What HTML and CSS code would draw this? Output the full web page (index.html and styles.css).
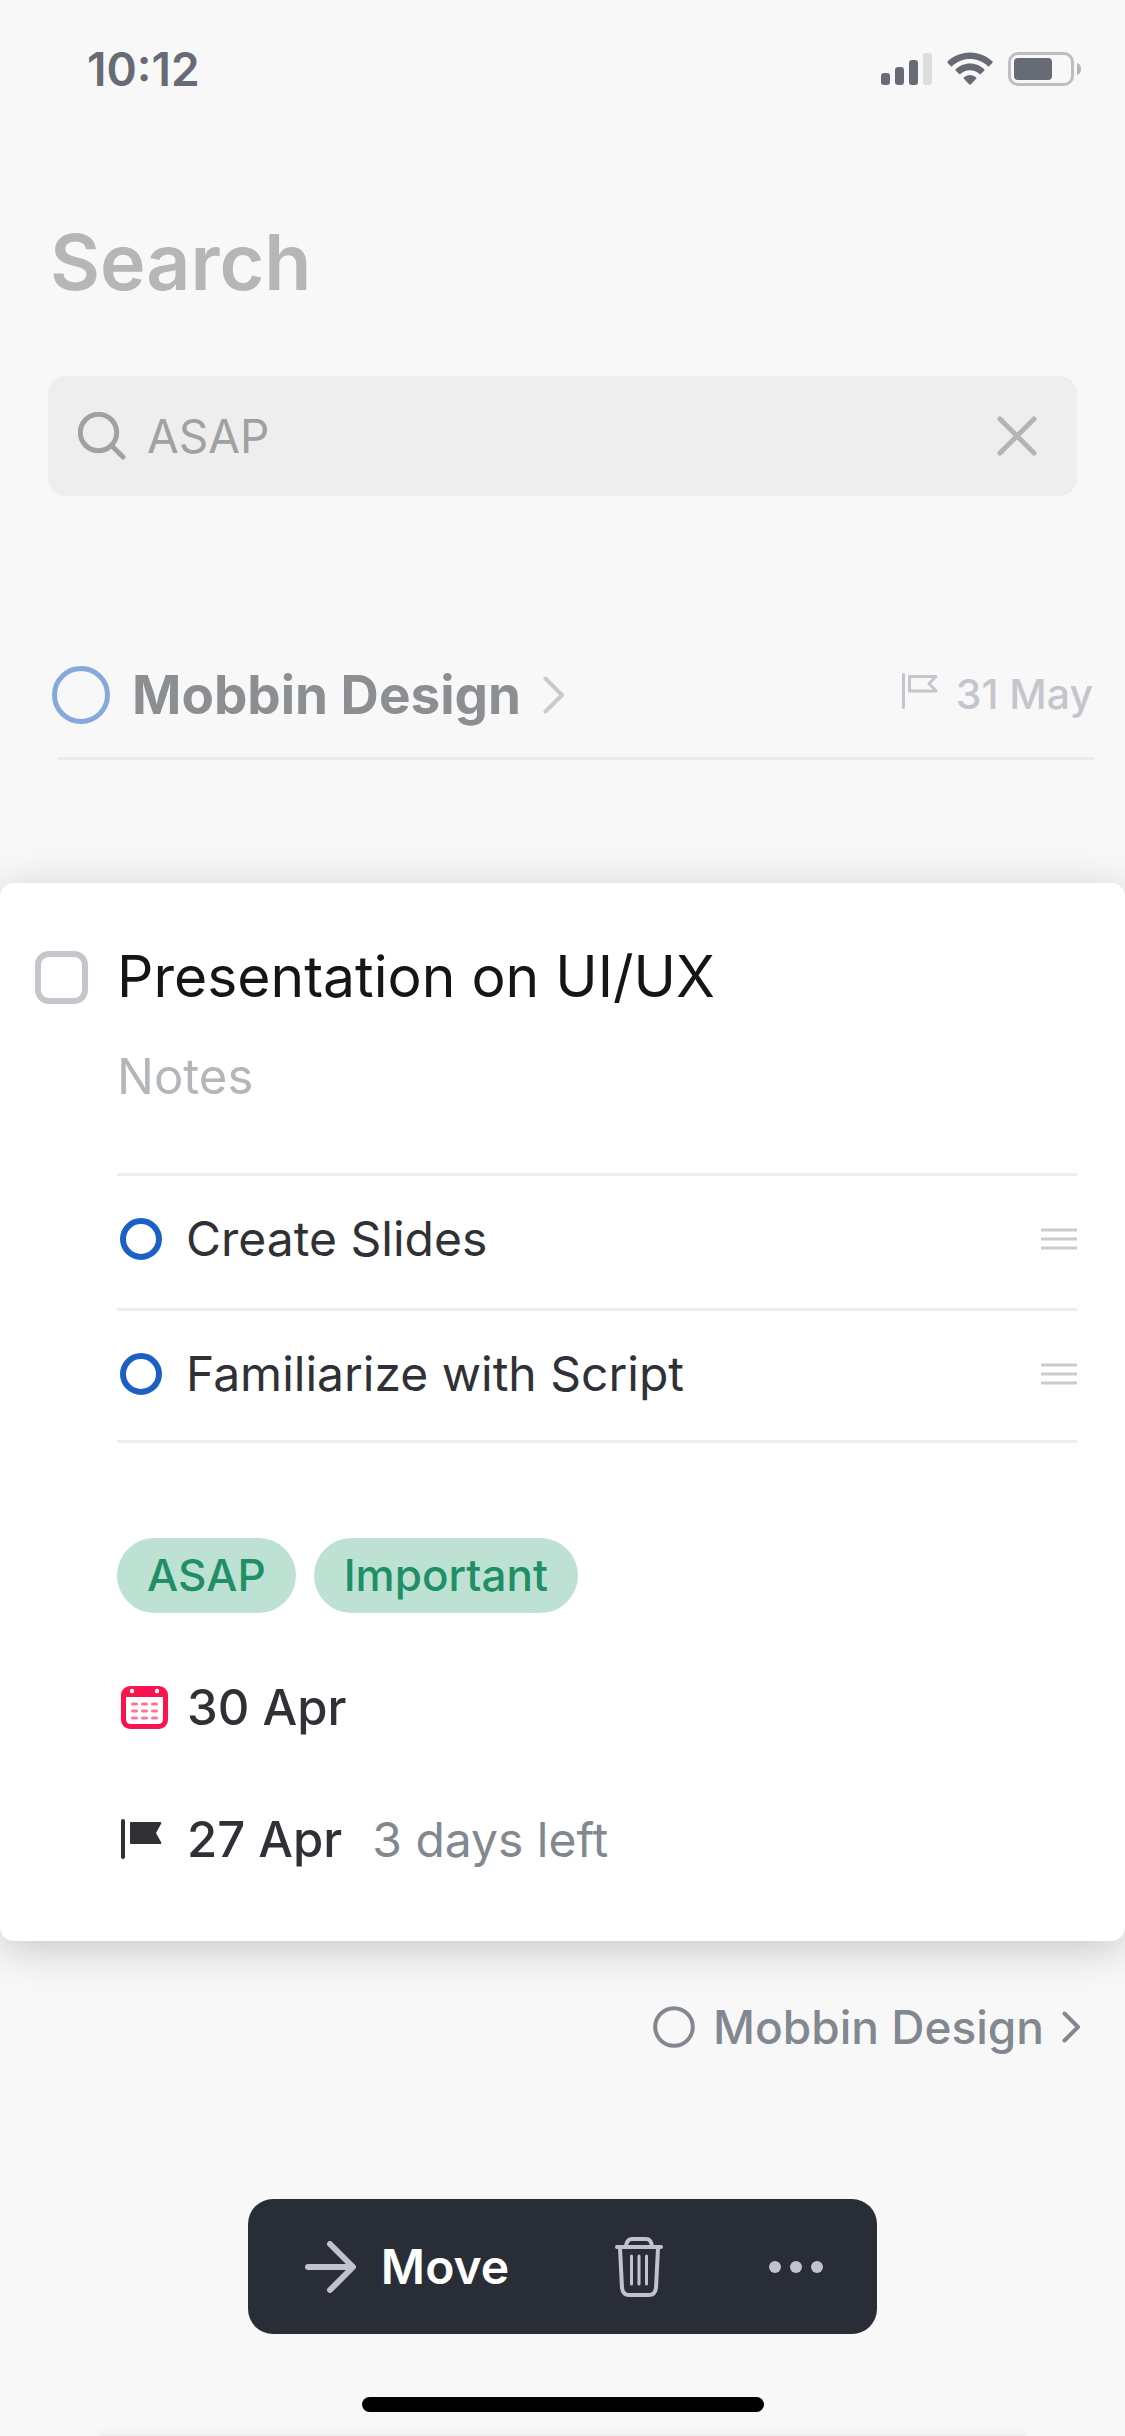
FILE: index.html
```html
<!DOCTYPE html>
<html lang="en">

<head>
    <meta charset="utf-8">
    <meta name="viewport" content="width=device-width, initial-scale=1">
    <title>Search</title>
    <link rel="stylesheet" href="styles.css">
</head>

<body>
    <div class="status-bar">
        <span class="time">10:12</span>
        <div class="status-icons">
            <svg width="51" height="34" viewBox="0 0 51 34">
                <rect x="0" y="21" width="9" height="12" rx="3" />
                <rect x="14" y="15" width="9" height="18" rx="3" />
                <rect x="28" y="8" width="9" height="25" rx="3" />
                <rect class="bar-off" x="42" y="1" width="9" height="32" rx="3" />
            </svg>
            <svg width="46" height="34" viewBox="0 0 46 34">
                <path d="M23 0.500C31.800 0.500 39.800 4 45.500 9.600Q46 10.200 45.500 10.800L42.100 14.200Q41.500 14.700 40.900 14.200C36.200 9.700 29.900 7 23 7S9.800 9.700 5.100 14.200Q4.500 14.700 3.900 14.200L0.500 10.800Q0 10.200 0.500 9.600C6.200 4 14.200 0.500 23 0.500Z" />
                <path d="M23 11.500C28.700 11.500 33.800 13.700 37.400 17.400Q38 18 37.400 18.600L33.800 22.100Q33.200 22.700 32.600 22.100C30 19.700 26.700 18.300 23 18.300S16 19.700 13.400 22.100Q12.800 22.700 12.200 22.100L8.600 18.600Q8 18 8.600 17.400C12.200 13.700 17.300 11.500 23 11.500Z" />
                <path d="M23 23C25.300 23 27.500 24 29.200 25.500Q29.800 26.100 29.200 26.700L23.600 32.500Q23 33.100 22.400 32.500L16.800 26.700Q16.200 26.100 16.800 25.500C18.500 24 20.700 23 23 23Z" />
            </svg>
            <svg width="74" height="34" viewBox="0 0 74 34">
                <rect class="battery-case" x="1.500" y="1.500" width="63" height="31" rx="8.500" />
                <rect x="6" y="6" width="38" height="22" rx="4" />
                <path class="battery-tip" d="M69 11Q73 12 73 17T69 23Z" />
            </svg>
        </div>
    </div>

    <main>
        <h1 class="page-title">Search</h1>

        <form class="search-box">
            <svg class="search-icon" width="48" height="48" viewBox="0 0 48 48">
                <circle cx="20.500" cy="20.500" r="18.200" />
                <path d="M34 34L45 45" />
            </svg>
            <input class="search-input" type="text" value="ASAP" aria-label="Search">
            <button class="clear-button" type="button" aria-label="Clear">
                <svg width="40" height="40" viewBox="0 0 40 40">
                    <path d="M3 3L37 37M37 3L3 37" />
                </svg>
            </button>
        </form>

        <div class="project-row">
            <a class="project-link" href="#">
                <svg class="project-circle" width="58" height="58" viewBox="0 0 58 58">
                    <circle cx="29" cy="29" r="26.500" />
                </svg>
                <span>Mobbin Design</span>
                <svg class="project-chevron" width="22" height="38" viewBox="0 0 22 38">
                    <path d="M2.500 2.500L19 19L2.500 35.500" />
                </svg>
            </a>
            <span class="deadline">
                <svg width="36" height="42" viewBox="0 0 36 42">
                    <path d="M1.500 1.500V34.500M7.500 3.500H34L27 10.500L34 18H7.500Z" />
                </svg>
                31 May
            </span>
        </div>

        <section class="card">
            <div class="task-title">
                <input class="task-check" type="checkbox" id="task">
                <label for="task">Presentation on UI/UX</label>
            </div>
            <div class="card-body">
                <input class="notes" type="text" placeholder="Notes" aria-label="Notes">

                <ul class="checklist">
                    <li>
                        <input class="item-check" type="checkbox" id="slides">
                        <label for="slides">Create Slides</label>
                        <svg class="handle" width="36" height="22" viewBox="0 0 36 22">
                            <path d="M0 2H36M0 11H36M0 20H36" />
                        </svg>
                    </li>
                    <li>
                        <input class="item-check" type="checkbox" id="script">
                        <label for="script">Familiarize with Script</label>
                        <svg class="handle" width="36" height="22" viewBox="0 0 36 22">
                            <path d="M0 2H36M0 11H36M0 20H36" />
                        </svg>
                    </li>
                </ul>

                <div class="tags">
                    <span class="tag">ASAP</span>
                    <span class="tag">Important</span>
                </div>

                <div class="date-row">
                    <svg width="48" height="44" viewBox="0 0 48 44">
                        <rect class="cal-body" x="0" y="0" width="47" height="43" rx="9" />
                        <path class="cal-page" d="M5 11H42V33Q42 38 37 38H10Q5 38 5 33Z" />
                        <circle class="cal-page" cx="11" cy="5" r="2.200" />
                        <circle class="cal-page" cx="36" cy="5" r="2.200" />
                        <path class="cal-dots" d="M11.500 18H15.500M21.500 18H25.500M31.500 18H35.500M11.500 25H15.500M21.500 25H25.500M31.500 25H35.500M11.500 32H15.500M21.500 32H25.500M31.500 32H35.500" />
                    </svg>
                    <span>30 Apr</span>
                </div>
                <div class="date-row">
                    <svg width="48" height="44" viewBox="0 0 48 44">
                        <rect x="0" y="1" width="4" height="40" rx="2" />
                        <path d="M10 4H39Q41 4 40 6L35 15L40 24Q41 26 39 26H10Q9 26 9 25V5Q9 4 10 4Z" />
                    </svg>
                    <span>27 Apr</span>
                    <span class="days-left">3 days left</span>
                </div>
            </div>
        </section>

        <a class="location-link" href="#">
            <svg width="42" height="42" viewBox="0 0 42 42">
                <circle cx="21" cy="21" r="18.800" />
            </svg>
            <span>Mobbin Design</span>
            <svg width="19" height="32" viewBox="0 0 19 32">
                <path d="M2.500 2.500L16 16L2.500 29.500" />
            </svg>
        </a>
    </main>

    <nav class="toolbar">
        <button type="button" class="move-button">
            <svg width="51" height="52" viewBox="0 0 51 52">
                <path d="M3 26H47M25 3L48 26L25 49" />
            </svg>
            Move
        </button>
        <button type="button" aria-label="Delete">
            <svg class="trash" width="48" height="62" viewBox="0 0 48 62">
                <path d="M2 11H46" />
                <path d="M11 10Q12 3 17 3H31Q36 3 37 10" />
                <path d="M5 12L7 52Q8 59 14 59H34Q40 59 41 52L43 12" />
                <path class="trash-lines" d="M16.500 20V48M24 20V48M31.500 20V48" />
            </svg>
        </button>
        <button type="button" aria-label="More">
            <svg class="dots" width="54" height="12" viewBox="0 0 54 12">
                <circle cx="6" cy="6" r="6" />
                <circle cx="27" cy="6" r="6" />
                <circle cx="48" cy="6" r="6" />
            </svg>
        </button>
    </nav>
    <div class="home-indicator"></div>
    <div class="bottom-edge"></div>
</body>

</html>
```

FILE: styles.css
```css
* {
    box-sizing: border-box;
}

body {
    margin: 0;
    min-height: 100vh;
    display: flex;
    flex-direction: column;
    background-color: #f8f8f8;
    font-family: Inter, 'Liberation Sans', sans-serif;
    color: #303136;
    overflow-x: hidden;
}

svg {
    display: block;
    flex-shrink: 0;
}

button,
input {
    font: inherit;
    margin: 0;
    padding: 0;
    border: 0;
    background: none;
    outline: none;
}

a {
    text-decoration: none;
}

.status-bar {
    display: flex;
    justify-content: space-between;
    align-items: center;
    padding: 42px 43px 0 87px;
    line-height: 54px;
    color: #666b75;
}

.time {
    font-size: 46px;
    font-weight: 600;
}

.status-icons {
    display: flex;
    gap: 15px;
    fill: #666b75;
}

.bar-off {
    fill: #dcdddf;
}

.battery-case {
    fill: none;
    stroke: #bdbec2;
    stroke-width: 3;
}

.battery-tip {
    fill: #b3b5ba;
}

.page-title {
    margin: 118px 50px 66px;
    font-size: 77px;
    font-weight: 600;
    line-height: 96px;
    color: #b5b6b8;
}

.search-box {
    display: flex;
    align-items: center;
    gap: 21px;
    height: 120px;
    margin: 0 48px;
    padding: 0 40px 0 30px;
    border-radius: 18px;
    background-color: #eeeeee;
}

.search-icon {
    fill: none;
    stroke: #a0a2a1;
    stroke-width: 5;
    stroke-linecap: round;
}

.search-input {
    flex: 1;
    min-width: 0;
    font-size: 46px;
    line-height: 60px;
    color: #a0a2a1;
}

.clear-button svg {
    stroke: #b2b5b4;
    stroke-width: 5;
    stroke-linecap: round;
}

.project-row {
    display: flex;
    justify-content: space-between;
    align-items: center;
    height: 128px;
    margin: 136px 30px 0 57px;
    border-bottom: 3px solid #ebebeb;
}

.project-link {
    display: flex;
    align-items: center;
    gap: 22px;
    margin-left: -5px;
    font-size: 53px;
    font-weight: 700;
    color: #8b8f92;
}

.project-circle {
    fill: none;
    stroke: #86a9dc;
    stroke-width: 5;
}

.project-chevron {
    fill: none;
    stroke: #c9cacc;
    stroke-width: 4;
    stroke-linecap: round;
    stroke-linejoin: round;
}

.deadline {
    display: flex;
    align-items: center;
    gap: 18px;
    padding-right: 2px;
    font-size: 41px;
    font-weight: 500;
    line-height: 54px;
    padding-bottom: 2px;
    color: #c3c6cd;
}

.deadline svg {
    fill: none;
    stroke: #c3c6cd;
    stroke-width: 3;
    stroke-linecap: round;
    stroke-linejoin: round;
}

.card {
    margin-top: 123px;
    padding: 58px 48px 71px 35px;
    border-radius: 14px;
    background-color: #ffffff;
    box-shadow: 0 8px 44px rgba(0, 0, 0, 0.2);
}

.task-title {
    display: flex;
    align-items: center;
    gap: 29px;
    font-size: 57px;
    line-height: 72px;
    color: #141517;
}

.task-check,
.item-check {
    appearance: none;
    flex-shrink: 0;
}

.task-check {
    width: 53px;
    height: 53px;
    border: 6px solid #c3c7cb;
    border-radius: 14px;
}

.card-body {
    padding-left: 82px;
}

.notes {
    display: block;
    width: 100%;
    margin-top: 34px;
    font-size: 49px;
    line-height: 60px;
    height: 60px;
}

.notes::placeholder {
    color: #b3b6ba;
    opacity: 1;
}

.checklist {
    list-style: none;
    margin: 66px 0 0;
    padding: 0;
    border-bottom: 3px solid #ededed;
}

.checklist li {
    display: flex;
    align-items: center;
    gap: 24px;
    padding: 30px 0 36px 3px;
    border-top: 3px solid #ededed;
    font-size: 48px;
    line-height: 66px;
}

.checklist li:last-child {
    padding-bottom: 33px;
}

.item-check {
    width: 42px;
    height: 42px;
    border: 6px solid #1c60c6;
    border-radius: 50%;
}

.handle {
    margin-left: auto;
    stroke: #cccccc;
    stroke-width: 3;
}

.tags {
    display: flex;
    gap: 18px;
    margin-top: 95px;
}

.tag {
    padding: 0 30px;
    border-radius: 38px;
    background-color: #bde2d3;
    color: #218f65;
    font-size: 44px;
    font-weight: 500;
    line-height: 75px;
}

.date-row {
    display: flex;
    align-items: center;
    margin-top: 65px;
    padding-left: 4px;
    font-size: 49px;
    font-weight: 500;
    line-height: 60px;
    fill: #303136;
}

.date-row + .date-row {
    margin-top: 72px;
}

.date-row svg {
    margin-right: 18px;
}

.cal-body {
    fill: #f9134f;
}

.cal-page {
    fill: #ffffff;
}

.cal-dots {
    stroke: #ff7396;
    stroke-width: 3;
    stroke-linecap: round;
}

.days-left {
    margin-left: 30px;
    font-size: 48px;
    font-weight: 400;
    color: #82888f;
}

.location-link {
    display: flex;
    justify-content: flex-end;
    align-items: center;
    gap: 18px;
    margin: 56px 44px 0 0;
    font-size: 46px;
    font-weight: 500;
    line-height: 60px;
    color: #82888f;
}

.location-link svg {
    fill: none;
    stroke: #82888f;
    stroke-width: 4;
    stroke-linecap: round;
    stroke-linejoin: round;
}

.toolbar {
    display: flex;
    align-items: center;
    align-self: center;
    gap: 106px;
    height: 135px;
    margin-top: 142px;
    padding: 0 54px 0 57px;
    border-radius: 25px;
    background-color: #292d36;
}

.toolbar button {
    color: #ffffff;
}

.toolbar svg {
    fill: none;
    stroke: #c0c3cd;
    stroke-width: 6;
    stroke-linecap: round;
    stroke-linejoin: round;
}

.toolbar .move-button {
    display: flex;
    align-items: center;
    gap: 25px;
    font-size: 48px;
    font-weight: 600;
}

.toolbar .trash {
    stroke-width: 4;
}

.toolbar .trash-lines {
    stroke-width: 3;
}

.toolbar .dots {
    fill: #c0c3cd;
    stroke: none;
}

.home-indicator {
    align-self: center;
    width: 402px;
    height: 15px;
    margin: 63px 0 23px;
    border-radius: 8px;
    background-color: #000000;
}

/* soft shadow along the bottom of the screen */
.bottom-edge {
    height: 1px;
    margin: 0 100px;
    background-color: #ececec;
    box-shadow: 0 0 8px 2px rgba(0, 0, 0, 0.06);
}
```
